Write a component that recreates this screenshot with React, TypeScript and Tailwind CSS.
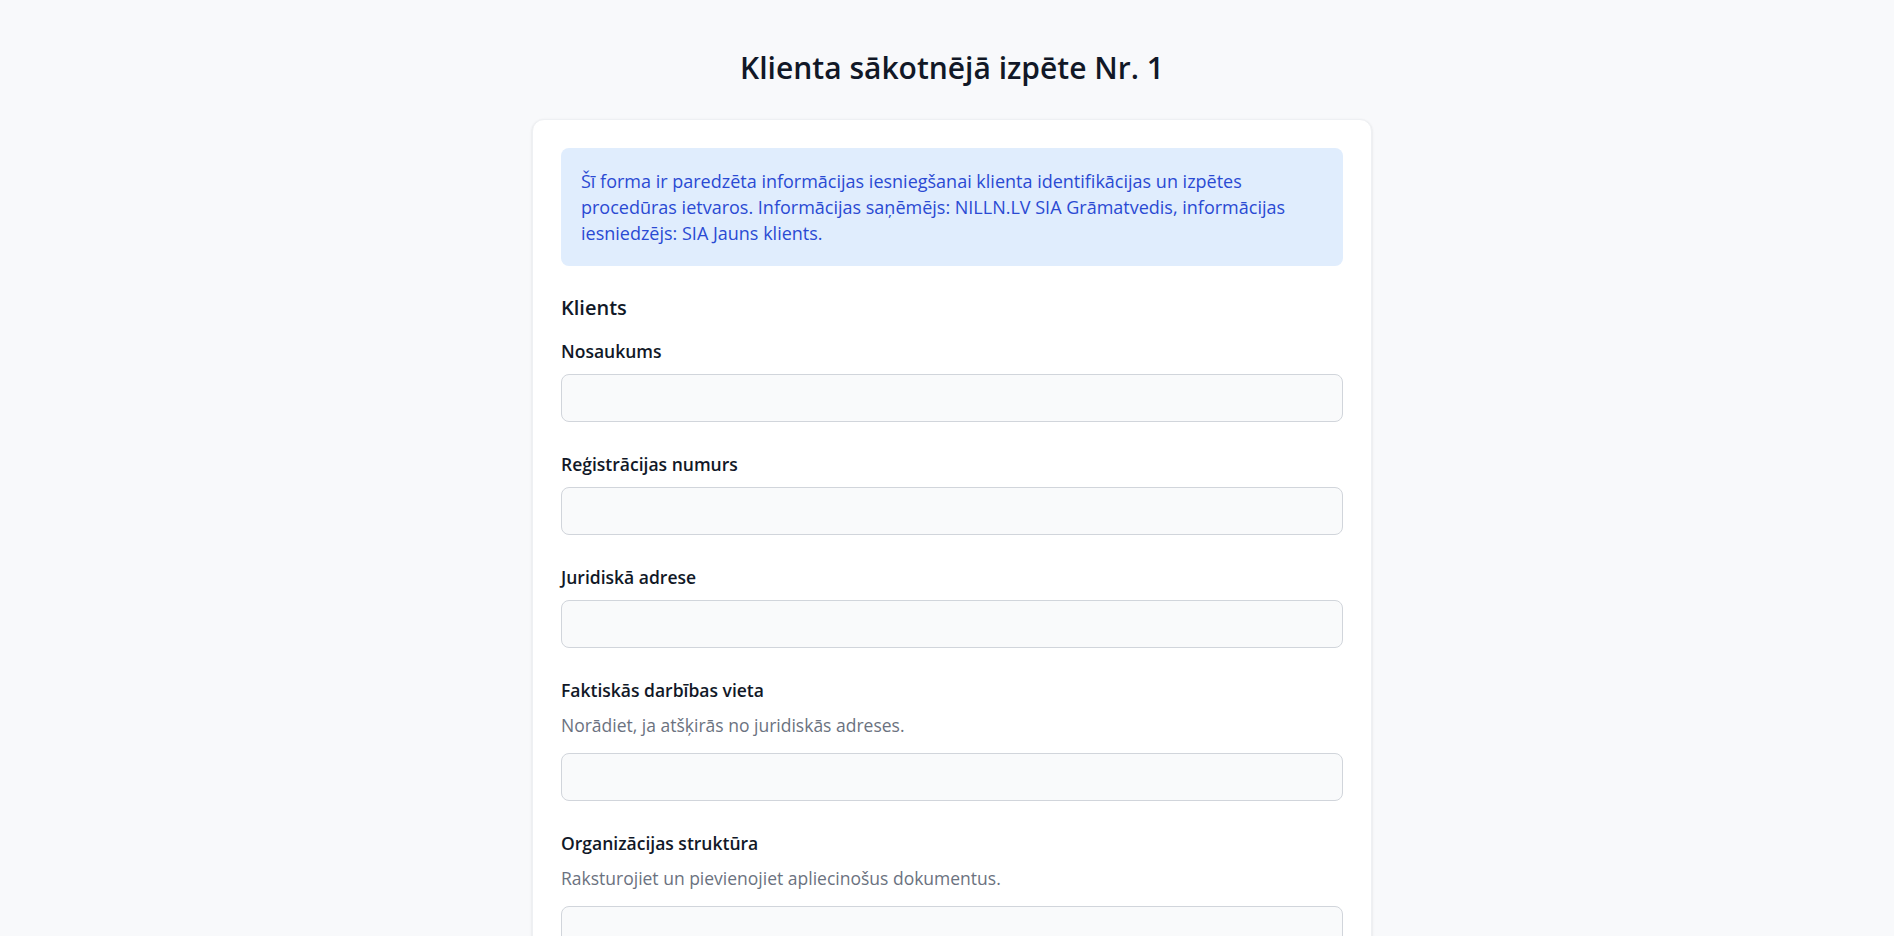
import { useState } from "react";

type Field = {
  name: string;
  label: string;
  hint?: string;
};

const fields: Field[] = [
  { name: "name", label: "Nosaukums" },
  { name: "regNo", label: "Reģistrācijas numurs" },
  { name: "legalAddress", label: "Juridiskā adrese" },
  {
    name: "actualAddress",
    label: "Faktiskās darbības vieta",
    hint: "Norādiet, ja atšķirās no juridiskās adreses.",
  },
  {
    name: "structure",
    label: "Organizācijas struktūra",
    hint: "Raksturojiet un pievienojiet apliecinošus dokumentus.",
  },
];

const FormField = ({
  field,
  value,
  onChange,
}: {
  field: Field;
  value: string;
  onChange: (v: string) => void;
}) => {
  return (
    <div>
      <label
        htmlFor={field.name}
        className="block mb-[11px] text-[17.5px] leading-6 font-semibold text-[#111827]"
      >
        {field.label}
      </label>
      {field.hint && (
        <p className="mb-4 text-[17.5px] leading-6 text-[#6b7280]">
          {field.hint}
        </p>
      )}
      <input
        id={field.name}
        type="text"
        value={value}
        onChange={(e) => onChange(e.target.value)}
        className="block w-full h-12 px-4 rounded-lg border border-[#d1d5db] bg-[#f9fafb] text-base text-[#111827] outline-none focus:border-[#3b82f6]"
      />
    </div>
  );
};

const App = () => {
  const [values, setValues] = useState<Record<string, string>>({});

  const setValue = (name: string, v: string) =>
    setValues((prev) => ({ ...prev, [name]: v }));

  return (
    <div
      className="min-h-screen bg-[#f8f9fb] pt-[50px] pb-16 pl-[10px]"
      style={{ fontFamily: '"Open Sans", "Noto Sans", sans-serif' }}
    >
      <h1 className="mb-[33px] text-center text-[30px] leading-9 font-semibold text-[#111827]">
        Klienta sākotnējā izpēte Nr. 1
      </h1>

      <div className="mx-auto w-[840px] rounded-xl border border-[#eef0f3] bg-white p-7 shadow-sm">
        <div className="mb-7 rounded-lg bg-[#e0edfd] p-5 text-lg leading-[26px] text-[#2a4ad3]">
          Šī forma ir paredzēta informācijas iesniegšanai klienta identifikācijas
          un izpētes procedūras ietvaros. Informācijas saņēmējs: NILLN.LV SIA
          Grāmatvedis, informācijas iesniedzējs: SIA Jauns klients.
        </div>

        <h2 className="mb-[17px] text-xl leading-7 font-semibold text-[#111827]">
          Klients
        </h2>

        <div className="flex flex-col gap-[30px]">
          {fields.map((f) => (
            <FormField
              key={f.name}
              field={f}
              value={values[f.name] ?? ""}
              onChange={(v) => setValue(f.name, v)}
            />
          ))}
        </div>
      </div>
    </div>
  );
};

export default App;
